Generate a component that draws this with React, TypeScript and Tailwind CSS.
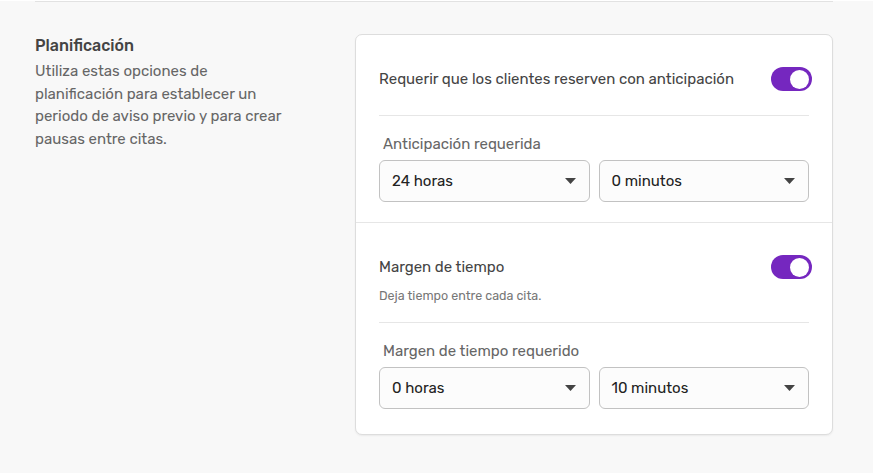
import { useState } from 'react';

function Toggle({ on, onChange }: { on: boolean; onChange: () => void }) {
  return (
    <button
      onClick={onChange}
      className={`w-[41px] h-[24px] -mr-[3px] rounded-full flex items-center px-[3px] shrink-0 ${on ? 'bg-[#7527bf] justify-end' : 'bg-[#cfcfcf] justify-start'}`}
    >
      <span className="w-[19px] h-[19px] rounded-full bg-white block" />
    </button>
  );
}

function Select({ value }: { value: string }) {
  return (
    <div className="flex-1 h-[42px] rounded-[6px] border border-[#c2c2c2] bg-[#fcfcfc] flex items-center justify-between pl-[12px] pr-[13px] text-[15px] text-[#222]">
      <span>{value}</span>
      <svg width="11" height="6" viewBox="0 0 11 6"><path d="M0 0h11L5.5 6z" fill="#444" /></svg>
    </div>
  );
}

export default function App() {
  const [advance, setAdvance] = useState(true);
  const [buffer, setBuffer] = useState(true);

  return (
    <div className="w-[873px] h-[473px] bg-[#f8f8f8] px-[35px] text-[#333]" style={{ fontFamily: 'Rubik, Inter, "Noto Sans", sans-serif' }}>
      <div className="border-t border-[#e2e2e2] mt-[1px] mr-[5px]" />
      <div className="flex pt-[32px] pr-[5px]">
        <div className="w-[320px] shrink-0 mt-[1px]">
          <h2 className="text-[16px] font-medium text-[#444] leading-[22px]">Planificación</h2>
          <p className="text-[15px] text-[#666] leading-[22.5px] mt-[3px] w-[255px]">
            Utiliza estas opciones de planificación para establecer un periodo de aviso previo y para crear pausas entre citas.
          </p>
        </div>
        <div className="flex-1 bg-white border border-[#dddddd] rounded-[7px] shadow-[0_1px_2px_rgba(0,0,0,0.06)]">
          <div className="px-[23px] pt-[32px] pb-[20px]">
            <div className="flex items-center justify-between">
              <span className="text-[15px] text-[#444]">Requerir que los clientes reserven con anticipación</span>
              <Toggle on={advance} onChange={() => setAdvance(!advance)} />
            </div>
            <div className="border-t border-[#e6e6e6] mt-[24px]" />
            <div className="text-[15px] text-[#666] pl-[4px] mt-[18px] leading-[20px]">Anticipación requerida</div>
            <div className="flex gap-[9px] mt-[6px]">
              <Select value="24 horas" />
              <Select value="0 minutos" />
            </div>
          </div>
          <div className="border-t border-[#e6e6e6]" />
          <div className="px-[23px] pt-[32px] pb-[25px]">
            <div className="flex items-center justify-between">
              <span className="text-[15px] text-[#444]">Margen de tiempo</span>
              <Toggle on={buffer} onChange={() => setBuffer(!buffer)} />
            </div>
            <div className="text-[12.5px] text-[#777] mt-[8px]">Deja tiempo entre cada cita.</div>
            <div className="border-t border-[#e6e6e6] mt-[16px]" />
            <div className="text-[15px] text-[#666] pl-[4px] mt-[18px] leading-[20px]">Margen de tiempo requerido</div>
            <div className="flex gap-[9px] mt-[6px]">
              <Select value="0 horas" />
              <Select value="10 minutos" />
            </div>
          </div>
        </div>
      </div>
    </div>
  );
}
